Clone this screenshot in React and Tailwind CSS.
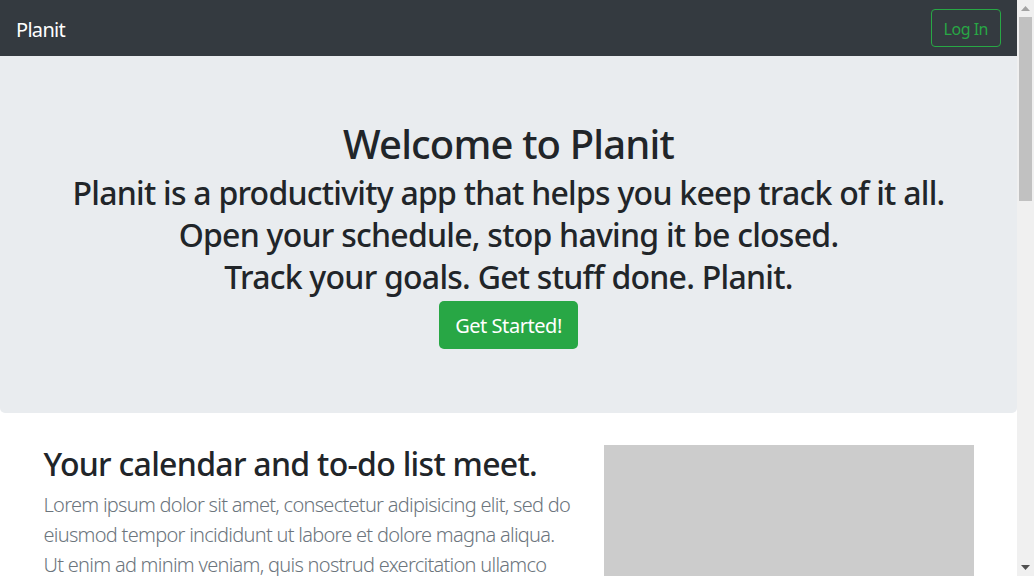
import React from "react";

const font = { fontFamily: '"Noto Sans", "Open Sans", Arial, sans-serif' };

function Scrollbar() {
  return (
    <div className="flex w-[17px] shrink-0 flex-col bg-[#f0f0f0]">
      <div className="flex h-[17px] items-center justify-center">
        <svg width="9" height="5" viewBox="0 0 9 5"><path d="M4.5 0 L9 5 L0 5 Z" fill="#a3a3a3" /></svg>
      </div>
      <div className="mx-[2px] h-[184px] bg-[#c1c1c1]" />
      <div className="flex-1" />
      <div className="flex h-[17px] items-center justify-center">
        <svg width="9" height="5" viewBox="0 0 9 5"><path d="M0 0 L9 0 L4.5 5 Z" fill="#505050" /></svg>
      </div>
    </div>
  );
}

export default function App() {
  return (
    <div className="flex h-[576px] w-[1034px] overflow-hidden bg-white" style={font}>
      <div className="w-[1017px] shrink-0 overflow-hidden">
        <nav className="flex h-[56px] items-center justify-between bg-[#343a40] px-4">
          <span className="pt-[3px] text-[20px] leading-[30px] tracking-[-0.7px] text-white">Planit</span>
          <button className="h-[38px] rounded-[4px] border border-[#28a745] px-[12px] pt-[1px] text-[16px] tracking-[-0.5px] text-[#28a745]">
            Log In
          </button>
        </nav>
        <section className="mb-8 rounded-b-[5px] bg-[#e9ecef] px-8 py-16 text-center text-[#212529]">
          <h1 className="mb-[4px] text-[40px] font-medium leading-[48px] tracking-[-0.85px]">Welcome to Planit</h1>
          <h3 className="text-[32px] font-medium leading-[42px] tracking-[-0.75px]">
            Planit is a productivity app that helps you keep track of it all.
          </h3>
          <h3 className="text-[32px] font-medium leading-[42px] tracking-[-0.75px]">
            Open your schedule, stop having it be closed.
          </h3>
          <h3 className="mb-[3px] text-[32px] font-medium leading-[42px] tracking-[-0.75px]">
            Track your goals. Get stuff done. Planit.
          </h3>
          <button className="h-[48px] rounded-[5px] bg-[#28a745] px-4 pt-[1px] text-[20px] tracking-[-0.45px] text-white">
            Get Started!
          </button>
        </section>
        <div className="mx-auto flex w-[960px]">
          <div className="w-[560px] px-[15px]">
            <h2 className="mb-2 text-[32px] font-medium leading-[38.4px] tracking-[-0.7px] text-[#212529]">
              Your calendar and to-do list meet.
            </h2>
            <p className="-mt-px text-[20px] font-light leading-[30px] tracking-[-0.72px] text-[#6c757d]">
              Lorem ipsum dolor sit amet, consectetur adipisicing elit, sed do eiusmod tempor incididunt ut labore et
              dolore magna aliqua. Ut enim ad minim veniam, quis nostrud exercitation ullamco laboris nisi ut aliquip ex
              ea commodo consequat.
            </p>
          </div>
          <div className="w-[400px] px-[15px]">
            <div className="h-[370px] w-[370px] bg-[#cccccc]" />
          </div>
        </div>
      </div>
      <Scrollbar />
    </div>
  );
}
